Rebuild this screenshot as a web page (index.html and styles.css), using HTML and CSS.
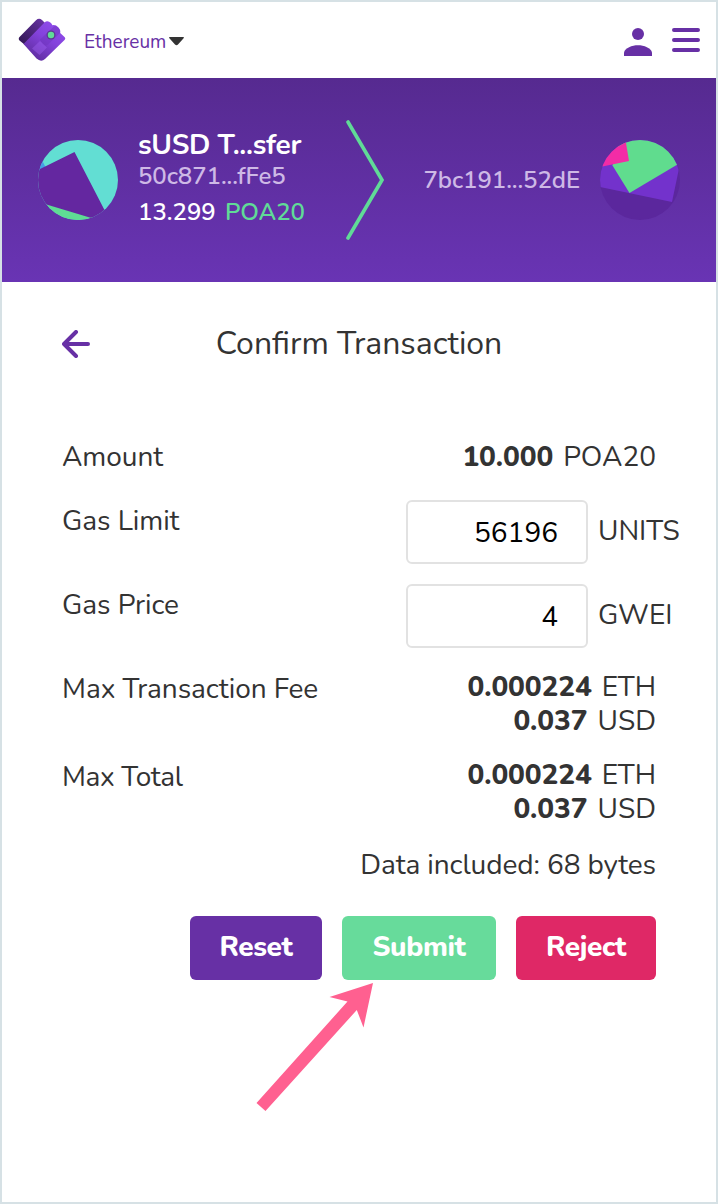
FILE: index.html
```html
<!DOCTYPE html>
<html lang="en">
<head>
    <meta charset="UTF-8">
    <meta name="viewport" content="width=device-width, initial-scale=1.0">
    <title>Confirm Transaction</title>
    <link rel="stylesheet" href="styles.css">
</head>
<body>
    <div class="app">
        <header class="app-bar">
            <svg class="logo" width="48" height="44" viewBox="0 0 48 44">
                <defs>
                    <linearGradient id="logoBack" x1="1" y1="0" x2="0" y2="1">
                        <stop offset="0" stop-color="#6c35aa"/>
                        <stop offset="0.3" stop-color="#572a8c"/>
                        <stop offset="1" stop-color="#2f164f"/>
                    </linearGradient>
                    <linearGradient id="logoFront" x1="1" y1="0" x2="0.3" y2="1">
                        <stop offset="0" stop-color="#9450f0"/>
                        <stop offset="0.5" stop-color="#8442dc"/>
                        <stop offset="1" stop-color="#5f2da0"/>
                    </linearGradient>
                </defs>
                <path d="M1.5 19 18 2.200Q21-0.500 24 2L28 6 7 27 1.500 22.500Q0 20.500 1.500 19Z" fill="url(#logoBack)"/>
                <path d="M5.500 26 26.500 4.500Q29.500 2 33 5L34.500 7.200Q37.500 6.500 40.500 9.500Q42.500 11.500 42.200 15L46.500 19Q48 20.500 46.500 22L27 41Q23 44.500 18.500 40.500Z" fill="url(#logoFront)"/>
                <path d="M22 21.500 37 7.500Q43 10 42 15L30 26.500Q27 29 24.500 26Z" fill="#6c33bb" opacity="0.45"/>
                <path d="m22 23 7 6.500-7.500 7.500-7.500-6.500Z" fill="#a264f5" opacity="0.4"/>
                <circle cx="33" cy="17" r="4.500" fill="#5b3a91"/>
                <circle cx="33" cy="17" r="3.200" fill="#60db97"/>
            </svg>
            <div class="network">
                <span class="network-name">Ethereum</span>
                <svg width="16" height="9" viewBox="0 0 16 9"><path d="M0.800 0H14.200Q15.500 0.200 14.600 1.200L9 7.500Q7.500 9 6 7.500L0.400 1.200Q-0.500 0.200 0.800 0Z" fill="#333"/></svg>
            </div>
            <svg class="user-icon" width="28" height="28" viewBox="0 0 28 28" fill="#6730a5">
                <circle cx="14" cy="6" r="6"/>
                <path d="M0 28V24.500C1 20 8 17.300 14 17.300S27 20 28 24.500V28Z"/>
            </svg>
            <svg width="28" height="24" viewBox="0 0 28 24" stroke="#6730a5" stroke-width="4" stroke-linecap="round">
                <path d="M2 2H26M2 12H26M2 22H26"/>
            </svg>
        </header>

        <section class="parties">
            <svg class="avatar" width="80" height="80" viewBox="0 0 80 80">
                <clipPath id="senderClip"><circle cx="40" cy="40" r="40"/></clipPath>
                <g clip-path="url(#senderClip)">
                    <rect width="80" height="80" fill="#62ded3"/>
                    <path d="M0 10 4 20 7.500 27 0 32Z" fill="#459ee5"/>
                    <path d="M0 60 8 64 56 78 50 80H0Z" fill="#5fdc94"/>
                    <path d="M0 30 36.500 12 66.500 70 60 80 8.500 64.500 0 62Z" fill="#6427a0"/>
                </g>
            </svg>
            <div class="sender">
                <div class="sender-name">sUSD T...sfer</div>
                <div class="address">50c871...fFe5</div>
                <div class="balance">13.299 <span class="token">POA20</span></div>
            </div>
            <svg class="chevron" width="38" height="120" viewBox="0 0 38 120" fill="none" stroke="#60db97" stroke-width="3.600" stroke-linecap="round">
                <path d="M2 2 36 60 2 118"/>
            </svg>
            <div class="address recipient">7bc191...52dE</div>
            <svg class="avatar" width="80" height="80" viewBox="0 0 80 80">
                <clipPath id="recipientClip"><circle cx="40" cy="40" r="40"/></clipPath>
                <g clip-path="url(#recipientClip)">
                    <rect width="80" height="80" fill="#5b279d"/>
                    <path d="M0 0H85L72 62 0 47Z" fill="#7332cc"/>
                    <path d="M12.500 25.500 20 0H80V23L29.500 53Z" fill="#60dc8e"/>
                    <path d="M0 27 29 21 25.500 0H0Z" fill="#f22ca6"/>
                </g>
            </svg>
        </section>

        <div class="title-row">
            <svg class="back" width="28" height="28" viewBox="0 0 28 28" fill="none" stroke="#6730a5" stroke-width="4" stroke-linecap="round" stroke-linejoin="round">
                <path d="M14 2 2 14 14 26M2 14H26"/>
            </svg>
            <h1>Confirm Transaction</h1>
        </div>

        <form class="details">
            <div class="row amount">
                <span class="label">Amount</span>
                <span class="value"><b>10.000</b> <span class="unit">POA20</span></span>
            </div>
            <div class="row field">
                <label class="label" for="gasLimit">Gas Limit</label>
                <input type="text" id="gasLimit" value="56196">
                <span class="field-unit">UNITS</span>
            </div>
            <div class="row field">
                <label class="label" for="gasPrice">Gas Price</label>
                <input type="text" id="gasPrice" value="4">
                <span class="field-unit">GWEI</span>
            </div>
            <div class="row total">
                <span class="label">Max Transaction Fee</span>
                <div class="value">
                    <div><b>0.000224</b> <span class="unit">ETH</span></div>
                    <div><b>0.037</b> <span class="unit">USD</span></div>
                </div>
            </div>
            <div class="row total">
                <span class="label max-total">Max Total</span>
                <div class="value">
                    <div><b>0.000224</b> <span class="unit">ETH</span></div>
                    <div><b>0.037</b> <span class="unit">USD</span></div>
                </div>
            </div>
            <div class="data-size">Data included: 68 bytes</div>

            <div class="buttons">
                <button type="button" class="btn reset">Reset</button>
                <button type="button" class="btn submit">Submit</button>
                <button type="button" class="btn reject">Reject</button>
                <!-- Arrow that points at the submit button -->
                <svg class="pointer" width="118" height="130" viewBox="0 0 118 130">
                    <path d="M117 1 107.500 45.500 100.800 28 9.500 129 0.500 121 91.500 19.500 73.500 15Z" fill="#ff6090"/>
                </svg>
            </div>
        </form>
    </div>
</body>
</html>
```
FILE: styles.css
```css
* {
    box-sizing: border-box;
}

body {
    margin: 0;
    font-family: Nunito, Lato, sans-serif;
    font-size: 28px;
    line-height: 34px;
    color: #333;
    background: #fff;
}

svg {
    display: block;
    flex-shrink: 0;
}

.app {
    height: 1204px;
    border: 2px solid #d6e1e5;
}

.app-bar {
    display: flex;
    align-items: center;
    height: 76px;
    padding: 0 16px;
}

.network {
    display: flex;
    align-items: center;
    gap: 3px;
    margin-left: 18px;
    margin-right: auto;
    padding-top: 3px;
    font-size: 19px;
    color: #6730a5;
}

.user-icon {
    margin-top: 4px;
    margin-right: 20px;
}

.parties {
    display: flex;
    align-items: center;
    height: 204px;
    padding: 0 36px;
    background: linear-gradient(#562a90, #6934b4);
    color: #fff;
    white-space: nowrap;
}

.sender {
    width: 208px;
    margin-left: 20px;
}

.sender-name {
    font-weight: bold;
    line-height: 32px;
    letter-spacing: -0.3px;
}

.address {
    font-size: 24px;
    font-weight: 600;
    line-height: 31px;
    letter-spacing: -0.05px;
    color: #ceb9e6;
}

.balance {
    font-size: 24px;
    font-weight: 600;
    line-height: 40px;
}

.token {
    margin-left: 3px;
    color: #60db97;
}

.recipient {
    margin-left: auto;
    margin-right: 20px;
}

.title-row {
    display: flex;
    align-items: center;
    height: 124px;
    padding: 0 60px;
}

h1 {
    flex: 1;
    margin: 0 28px 0 0;
    font-size: 32px;
    font-weight: normal;
    text-align: center;
}

.details {
    padding: 34px 60px 0;
}

.row {
    display: flex;
    justify-content: space-between;
}

.label {
    letter-spacing: -0.05px;
}

.max-total {
    letter-spacing: -0.35px;
}

.amount {
    height: 60px;
}

.value {
    text-align: right;
}

.value b {
    font-weight: 800;
    letter-spacing: -0.1px;
}

.unit {
    margin-left: 3px;
}

.field {
    height: 84px;
    margin-right: -60px;
}

.field .label {
    width: 344px;
    padding-top: 4px;
}

.field input {
    width: 182px;
    height: 64px;
    padding: 1px 28px 0;
    border: 2px solid #e2e2e2;
    border-radius: 6px;
    font: inherit;
    color: #000;
    text-align: right;
}

.field-unit {
    flex: 1;
    padding: 14px 0 0 10px;
}

.total {
    height: 88px;
}

.total .label {
    padding-top: 4px;
}

.total .value {
    padding-top: 2px;
}

.data-size {
    margin-top: 4px;
    letter-spacing: -0.08px;
    text-align: right;
}

.buttons {
    position: relative;
    display: flex;
    justify-content: flex-end;
    gap: 20px;
    margin-top: 34px;
}

.btn {
    height: 64px;
    padding: 0 0 3px;
    border: none;
    border-radius: 6px;
    font: inherit;
    font-weight: 800;
    letter-spacing: -0.4px;
    color: #fff;
}

.reset {
    width: 132px;
    background: #6730a5;
}

.submit {
    width: 154px;
    background: #67db9b;
}

.reject {
    width: 140px;
    background: #df2866;
}

.pointer {
    position: absolute;
    top: 66px;
    left: 194px;
}
```
